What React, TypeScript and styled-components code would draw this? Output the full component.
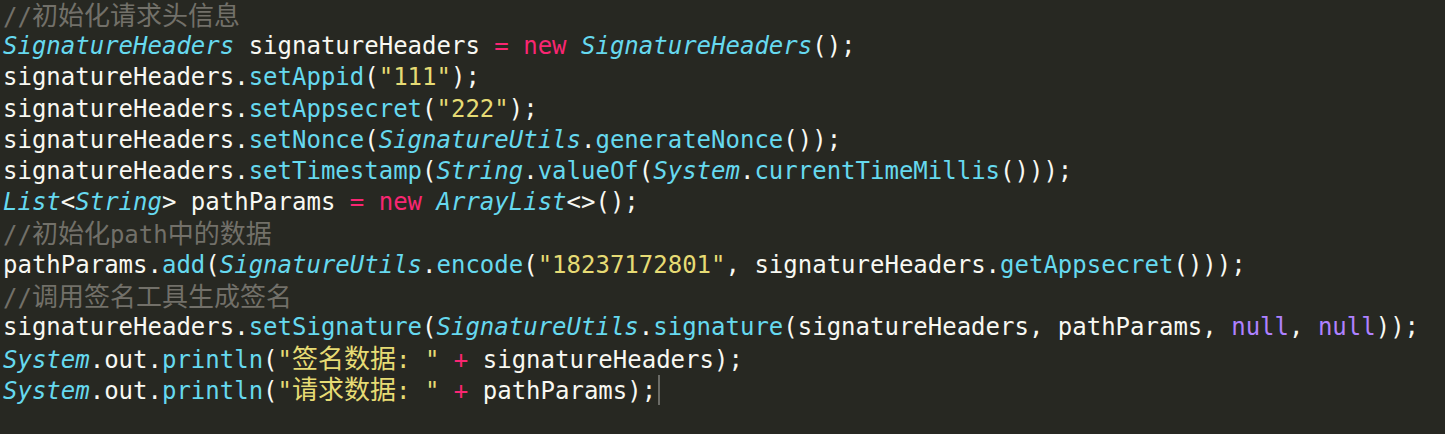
import React from "react";
import styled, { createGlobalStyle } from "styled-components";

const Global = createGlobalStyle`
  html, body { margin: 0; padding: 0; background: #272822; }
  body { width: 1445px; height: 434px; overflow: hidden; }
`;

type Kind = "plain" | "type" | "fn" | "kw" | "str" | "num" | "cm" | "const";

const colors: Record<Kind, string> = {
  plain: "#f8f8f2",
  type: "#66d9ef",
  fn: "#66d9ef",
  kw: "#f92672",
  str: "#e6db74",
  num: "#e6db74",
  cm: "#727069",
  const: "#ae81ff",
};

const Editor = styled.div`
  background: #272822;
  width: 1445px;
  height: 434px;
  box-sizing: border-box;
  padding: 0 0 0 3px;
  font-family: "DejaVu Sans Mono", "Noto Sans CJK SC", monospace;
  font-size: 24px;
  line-height: 31.2px;
  color: #f8f8f2;
  white-space: pre;
`;

const Line = styled.div`
  height: 31.2px;
  display: flex;
  align-items: center;
`;

const Tok = styled.span<{ $k: Kind }>`
  color: ${(p) => colors[p.$k]};
  font-style: ${(p) => (p.$k === "type" ? "italic" : "normal")};
`;

const Cjk = styled.span`
  font-family: "Noto Sans CJK SC", sans-serif;
  font-size: 26px;
`;

const Caret = styled.span`
  display: inline-block;
  width: 2px;
  height: 30px;
  background: #6b6b66;
  margin-left: 2px;
`;

type Seg = [Kind, string];

const renderText = (text: string) => {
  const parts = text.split(/([\u3000-\u9fff\uff00-\uffef]+)/);
  return parts.map((p, i) =>
    /[\u3000-\u9fff\uff00-\uffef]/.test(p) ? <Cjk key={i}>{p}</Cjk> : p
  );
};

const lines: Seg[][] = [
  [["cm", "//初始化请求头信息"]],
  [["type", "SignatureHeaders"], ["plain", " signatureHeaders "], ["kw", "="], ["plain", " "], ["kw", "new"], ["plain", " "], ["type", "SignatureHeaders"], ["plain", "();"]],
  [["plain", "signatureHeaders."], ["fn", "setAppid"], ["plain", "("], ["str", "\"111\""], ["plain", ");"]],
  [["plain", "signatureHeaders."], ["fn", "setAppsecret"], ["plain", "("], ["str", "\"222\""], ["plain", ");"]],
  [["plain", "signatureHeaders."], ["fn", "setNonce"], ["plain", "("], ["type", "SignatureUtils"], ["plain", "."], ["fn", "generateNonce"], ["plain", "());"]],
  [["plain", "signatureHeaders."], ["fn", "setTimestamp"], ["plain", "("], ["type", "String"], ["plain", "."], ["fn", "valueOf"], ["plain", "("], ["type", "System"], ["plain", "."], ["fn", "currentTimeMillis"], ["plain", "()));"]],
  [["type", "List"], ["plain", "<"], ["type", "String"], ["plain", "> pathParams "], ["kw", "="], ["plain", " "], ["kw", "new"], ["plain", " "], ["type", "ArrayList"], ["plain", "<>();"]],
  [["cm", "//初始化path中的数据"]],
  [["plain", "pathParams."], ["fn", "add"], ["plain", "("], ["type", "SignatureUtils"], ["plain", "."], ["fn", "encode"], ["plain", "("], ["str", "\"18237172801\""], ["plain", ", signatureHeaders."], ["fn", "getAppsecret"], ["plain", "()));"]],
  [["cm", "//调用签名工具生成签名"]],
  [["plain", "signatureHeaders."], ["fn", "setSignature"], ["plain", "("], ["type", "SignatureUtils"], ["plain", "."], ["fn", "signature"], ["plain", "(signatureHeaders, pathParams, "], ["const", "null"], ["plain", ", "], ["const", "null"], ["plain", "));"]],
  [["type", "System"], ["plain", ".out."], ["fn", "println"], ["plain", "("], ["str", "\"签名数据: \""], ["plain", " "], ["kw", "+"], ["plain", " signatureHeaders);"]],
  [["type", "System"], ["plain", ".out."], ["fn", "println"], ["plain", "("], ["str", "\"请求数据: \""], ["plain", " "], ["kw", "+"], ["plain", " pathParams);"]],
];

export default function App() {
  return (
    <>
      <Global />
      <Editor>
        {lines.map((segs, i) => (
          <Line key={i}>
            <span>
              {segs.map(([k, t], j) => (
                <Tok key={j} $k={k}>
                  {renderText(t)}
                </Tok>
              ))}
            </span>
            {i === lines.length - 1 && <Caret />}
          </Line>
        ))}
      </Editor>
    </>
  );
}
